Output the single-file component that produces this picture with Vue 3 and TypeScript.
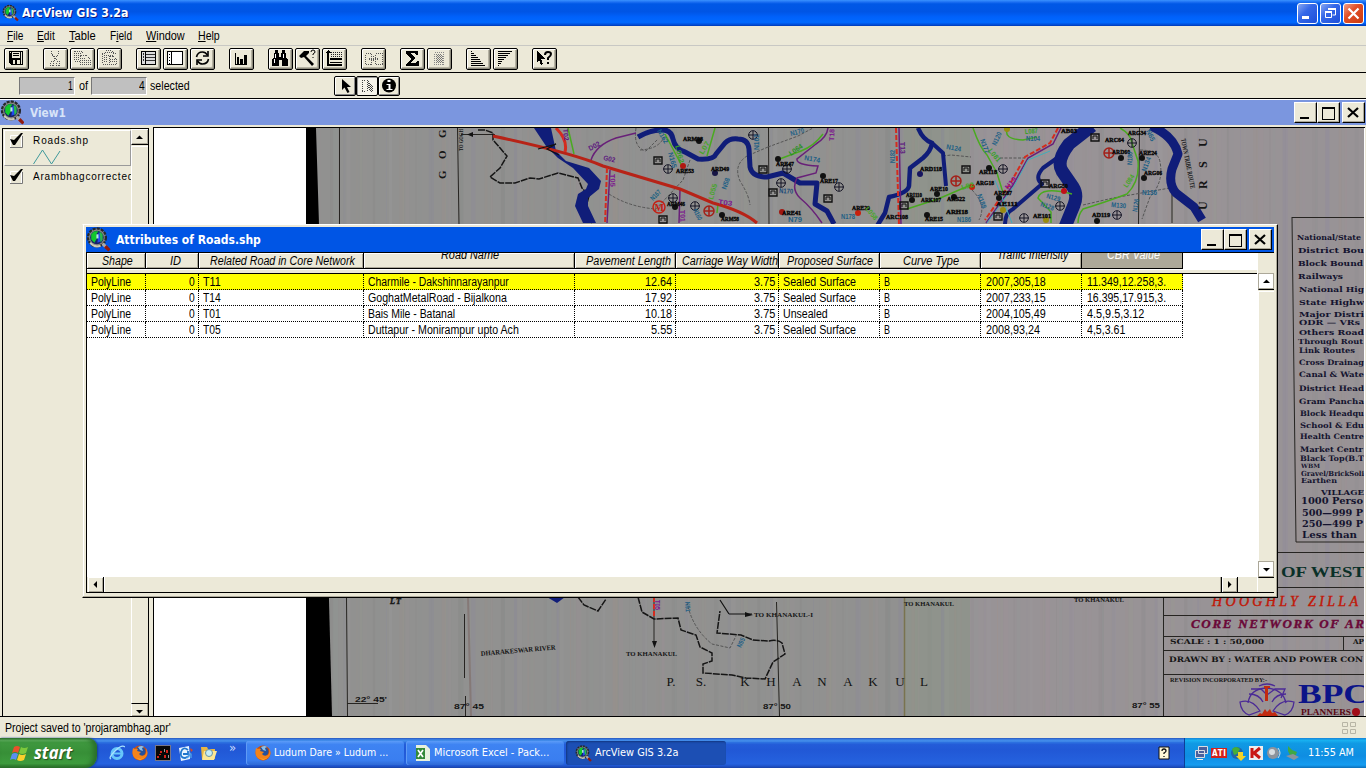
<script setup lang="ts">
interface Tool { id: string; gap: number }
interface Column { label: string; width: number; text: number; shift?: boolean; active?: boolean; right?: boolean }
interface Cell { t: string; w: number }
interface MapText { t: string; x: number; y: number; w?: number; s: number; c?: string; r?: number; k?: string; anchor?: 'start' | 'middle' | 'end' }

const vFit = {
  mounted(el: HTMLElement, binding: { value: number }) {
    const natural = el.offsetWidth
    if (!natural) return
    el.style.transform = `scaleX(${binding.value / natural})`
    el.style.marginRight = `${binding.value - natural}px`
  },
}

const menus = [
  { key: 'F', pre: '', rest: 'ile', w: 16 },
  { key: 'E', pre: '', rest: 'dit', w: 18 },
  { key: 'T', pre: '', rest: 'able', w: 27 },
  { key: 'i', pre: 'F', rest: 'eld', w: 22 },
  { key: 'W', pre: '', rest: 'indow', w: 39 },
  { key: 'H', pre: '', rest: 'elp', w: 22 },
]

const tools: Tool[] = [
  { id: 'save', gap: 0 }, { id: 'cut', gap: 14 }, { id: 'copy', gap: 2 }, { id: 'paste', gap: 2 },
  { id: 'selall', gap: 14 }, { id: 'selnone', gap: 2 }, { id: 'switch', gap: 2 }, { id: 'chart', gap: 14 },
  { id: 'find', gap: 14 }, { id: 'query', gap: 2 }, { id: 'promote', gap: 2 }, { id: 'join', gap: 14 },
  { id: 'sum', gap: 14 }, { id: 'calc', gap: 2 }, { id: 'asc', gap: 14 }, { id: 'desc', gap: 2 }, { id: 'help', gap: 14 },
]

const columns: Column[] = [
  { label: 'Shape', width: 59, text: 31 },
  { label: 'ID', width: 53, text: 11, right: true },
  { label: 'Related Road in Core Network', width: 165, text: 145 },
  { label: 'Road Name', width: 211, text: 58, shift: true },
  { label: 'Pavement Length', width: 101, text: 85, right: true },
  { label: 'Carriage Way Width', width: 103, text: 96, right: true },
  { label: 'Proposed Surface', width: 101, text: 86 },
  { label: 'Curve Type', width: 101, text: 56 },
  { label: 'Traffic Intensity', width: 101, text: 71, shift: true },
  { label: 'CBR Value', width: 101, text: 53, shift: true, active: true },
]

const c = (t: string, w: number): Cell => ({ t, w })
const rows: Cell[][] = [
  [c('PolyLine', 40), c('0', 6), c('T11', 18), c('Charmile - Dakshinnarayanpur', 141), c('12.64', 27), c('3.75', 21), c('Sealed Surface', 73), c('B', 6), c('2007,305,18', 60), c('11.349,12.258,3.', 79)],
  [c('PolyLine', 40), c('0', 6), c('T14', 18), c('GoghatMetalRoad - Bijalkona', 139), c('17.92', 27), c('3.75', 21), c('Sealed Surface', 73), c('B', 6), c('2007,233,15', 60), c('16.395,17.915,3.', 79)],
  [c('PolyLine', 40), c('0', 6), c('T01', 18), c('Bais Mile - Batanal', 87), c('10.18', 27), c('3.75', 21), c('Unsealed', 45), c('B', 6), c('2004,105,49', 60), c('4.5,9.5,3.12', 57)],
  [c('PolyLine', 40), c('0', 6), c('T05', 18), c('Duttapur - Monirampur upto Ach', 151), c('5.55', 21), c('3.75', 21), c('Sealed Surface', 73), c('B', 6), c('2008,93,24', 54), c('4,5,3.61', 38)],
]

const ink = '#14132e'
const legend: MapText[] = ([
  ['National/State', 1297, 240, 64, 8], ['District Bou', 1298, 253, 66, 8], ['Block Bound', 1298, 266, 65, 8],
  ['Railways', 1298, 279, 45, 8], ['National Hig', 1299, 292, 65, 8], ['State Highw', 1299, 305, 65, 8],
  ['Major Distri', 1299, 317, 65, 8], ['ODR — VRs', 1299, 325, 61, 7], ['Others Road', 1299, 335, 65, 8],
  ['Through Rout', 1298, 344, 65, 7], ['Link Routes', 1299, 353, 56, 7.5], ['Cross Drainag', 1299, 365, 65, 7.5],
  ['Canal & Wate', 1299, 377, 65, 7.5], ['District Head', 1299, 391, 65, 7.5], ['Gram Pancha', 1299, 404, 65, 7.5],
  ['Block Headqu', 1300, 416, 64, 7.5], ['School & Edu', 1300, 428, 64, 7.5], ['Health Centre', 1300, 439, 64, 7.5],
  ['Market Centr', 1300, 452, 63, 7.5], ['Black Top(B.T', 1300, 461, 64, 7.5], ['WBM', 1301, 468, 19, 6],
  ['Gravel/BrickSoli', 1301, 476, 63, 7], ['Earthen', 1301, 483, 36, 7], ['VILLAGE', 1321, 495, 43, 8],
  ['1000 Perso', 1301, 504, 62, 8.5], ['500—999 P', 1302, 516, 61, 8.5], ['250—499 P', 1302, 527, 61, 8.5], ['Less than', 1302, 538, 55, 8.5],
] as [string, number, number, number, number][]).map(([t, x, y, w, s]) => ({ t, x, y, w, s, c: ink, k: 'd' }))

const titleBlock: MapText[] = [
  { t: 'OF WEST', x: 1281, y: 577, w: 84, s: 15, c: '#0a3028', k: 'b' },
  { t: 'HOOGHLY ZILLA', x: 1212, y: 606, w: 146, s: 14, c: '#c01808', k: 'i' },
  { t: 'CORE NETWORK OF AR', x: 1191, y: 628, w: 173, s: 13, c: '#6a0838', k: 'bi' },
  { t: 'SCALE :  1 : 50,000', x: 1170, y: 644, w: 94, s: 7, k: 'd' },
  { t: 'AP', x: 1353, y: 644, w: 11, s: 7, k: 'd' },
  { t: 'DRAWN BY : WATER AND POWER CON', x: 1169, y: 662, w: 194, s: 7.5, k: 'd' },
  { t: 'REVISION INCORPORATED BY:-', x: 1170, y: 682, w: 97, s: 6.5, k: 'b' },
  { t: 'BPC', x: 1298, y: 703, w: 71, s: 27, c: '#0c1488', k: 'b' },
  { t: 'PLANNERS', x: 1301, y: 715, w: 50, s: 9, c: '#5a0814', k: 'b' },
]

const khanakul: MapText[] = ([['P.', 671], ['S.', 701], ['K', 745], ['H', 771], ['A', 797], ['N', 822], ['A', 848], ['K', 873], ['U', 900], ['L', 924]] as [string, number][])
  .map(([t, x]) => ({ t, x, y: 686, s: 13, c: '#111', anchor: 'middle' }))

const places: MapText[] = [
  { t: 'G', x: 446, y: 138, s: 11, r: -90, k: 'b' }, { t: 'O', x: 446, y: 159, s: 11, r: -90, k: 'b' }, { t: 'G', x: 446, y: 179, s: 11, r: -90, k: 'b' },
  { t: 'TO GOGH', x: 463, y: 151, w: 22, s: 6, r: -90, k: 'b' },
  { t: 'U', x: 1207, y: 147, s: 12, r: -90, k: 'b' }, { t: 'S', x: 1207, y: 168, s: 12, r: -90, k: 'b' }, { t: 'R', x: 1207, y: 189, s: 12, r: -90, k: 'b' }, { t: 'U', x: 1207, y: 210, s: 12, r: -90, k: 'b' },
  { t: 'TOWN TRIBE ROUTE', x: 1181, y: 139, w: 51, s: 7, r: 79, k: 'b' },
  { t: 'DHARAKESWAR RIVER', x: 481, y: 656, w: 75, s: 7, r: -5, k: 'b' },
  { t: 'TO KHANAKUL', x: 626, y: 656, w: 51, s: 7, k: 'b' },
  { t: 'TO KHANAKUL-I', x: 754, y: 617, w: 59, s: 7, k: 'b' },
  { t: 'TO KHANAKUL', x: 904, y: 606, w: 50, s: 6.5, k: 'b' },
  { t: 'TO KHANAKUL', x: 1074, y: 602, w: 50, s: 6, k: 'b' },
  { t: "22° 45'", x: 355, y: 702, w: 32, s: 7, k: 's' }, { t: '87° 45', x: 454, y: 709, w: 30, s: 7.5, k: 's' },
  { t: '87° 50', x: 763, y: 709, w: 28, s: 7.5, k: 's' }, { t: '87° 55', x: 1132, y: 708, w: 28, s: 7.5, k: 's' },
  { t: 'LT', x: 390, y: 604, w: 11, s: 8, k: 'bi' },
]

const villages: MapText[] = ([
  ['ARM98', 683, 141, 20], ['ARE53', 676, 173, 18], ['ARD49', 711, 171, 18], ['ARM46', 667, 206, 18], ['ARM58', 721, 221, 18],
  ['ARE47', 776, 166, 18], ['ARE17', 820, 183, 18], ['ARE41', 782, 215, 19], ['ARE20', 852, 210, 18], ['ARC108', 886, 219, 22],
  ['ARD118', 920, 171, 22], ['ARE10', 930, 191, 18], ['ARI110', 906, 197, 16], ['ARK107', 921, 202, 20], ['ARS22', 947, 201, 18],
  ['ARG18', 976, 185, 18], ['ARE15', 925, 221, 18], ['ARH18', 946, 214, 22], ['AR118', 979, 174, 18], ['AB03', 1061, 133, 16],
  ['ARC64', 1105, 142, 19], ['ARD60', 1112, 154, 18], ['ARE24', 1139, 155, 18], ['ARG06', 1144, 175, 18], ['ARG50', 1049, 188, 19],
  ['AE101', 1033, 218, 18], ['AD119', 1092, 217, 18], ['ARE87', 994, 195, 18], ['AE111', 996, 206, 22], ['ARG34', 1128, 135, 18],
] as [string, number, number, number][]).map(([t, x, y, w]) => ({ t, x, y, w, s: 6.5, c: '#080808', k: 'v' }))

const routes: MapText[] = ([
  ['T02', 563, 129, 12, 85, '#5b167e'], ['D02', 590, 151, 12, -28, '#5b167e'], ['G02', 603, 160, 12, 12, '#5b167e'], ['T05', 610, 174, 13, 88, '#7b168e'],
  ['N162', 657, 131, 15, 60, '#176080'], ['L062', 675, 146, 18, 75, '#359c28'], ['N165', 668, 153, 16, 75, '#205f85'], ['L07', 703, 155, 14, -60, '#45a528'],
  ['N162', 759, 150, 16, -90, '#205f85'], ['N170', 791, 136, 14, -15, '#205f85'], ['L064', 791, 156, 15, -35, '#259020'], ['N174', 804, 160, 16, 10, '#205f85'],
  ['N170', 779, 193, 14, 3, '#184878'], ['N167', 653, 201, 12, -45, '#156080'], ['T03', 718, 204, 14, 8, '#7b168e'], ['L055', 713, 200, 16, -75, '#45a528'],
  ['N58', 726, 190, 12, -70, '#205f85'], ['T01', 680, 210, 12, 88, '#7b168e'], ['N160', 693, 210, 12, 65, '#205f85'], ['T18', 834, 141, 12, -88, '#7b168e'],
  ['T13', 900, 142, 12, 88, '#5b167e'], ['N182', 895, 163, 13, -90, '#205f85'], ['N124', 946, 149, 15, 10, '#205f85'], ['N177', 980, 140, 15, 70, '#205f85'],
  ['L081', 988, 151, 15, 50, '#35a028'], ['L058', 865, 209, 15, 50, '#45a528'], ['N178', 841, 219, 14, 0, '#205f85'], ['N79', 788, 222, 14, 0, '#205f85'],
  ['N186', 957, 222, 14, 0, '#205f85'], ['N188', 977, 195, 15, 70, '#205f85'], ['L087', 1025, 134, 13, -5, '#35a028'], ['N104', 1026, 141, 14, 0, '#205f85'],
  ['L084', 1127, 188, 14, -55, '#45a528'], ['N180', 1132, 165, 13, -88, '#205f85'], ['N134', 1146, 172, 15, -70, '#205f85'], ['N136', 1142, 195, 15, 0, '#205f85'],
  ['M130', 1111, 207, 15, 5, '#205f85'], ['N126', 1137, 212, 13, -80, '#205f85'], ['N129', 1046, 198, 14, 15, '#205f85'], ['N128', 1040, 206, 14, 20, '#205f85'],
  ['N120', 996, 146, 14, -65, '#205f85'], ['N19', 1008, 190, 14, -50, '#8b168e'], ['T05', 655, 600, 10, 90, '#7b168e'], ['N91', 685, 602, 10, 85, '#205f85'], ['N95', 741, 648, 10, -65, '#205f85'],
  ['N65', 1146, 131, 12, 65, '#205f85'], ['L92', 962, 190, 13, -15, '#45a528'],
] as [string, number, number, number, number, string][]).map(([t, x, y, w, r, col]) => ({ t, x, y, w, s: 7, r, c: col, k: 's' }))

const mapTexts = [...legend, ...titleBlock, ...khanakul, ...places, ...villages, ...routes]
const crosses = [[668, 169], [673, 198], [695, 206], [753, 135], [787, 169], [781, 183], [839, 187], [1003, 169], [1024, 218], [1060, 206], [1132, 143], [1117, 215]]
const redCrosses = [[709, 211], [956, 181], [1109, 153]]
const houses = [[658, 160], [763, 169], [773, 192], [828, 198], [966, 169], [904, 205], [663, 219], [998, 216], [1095, 137], [1045, 183]]
const dots: [number, number, string][] = [
  [683, 166, '#b01810'], [715, 173, '#171545'], [699, 141, '#111'], [778, 159, '#111'], [823, 176, '#111'], [782, 212, '#a01810'], [858, 213, '#c8200c'],
  [920, 174, '#171560'], [972, 187, '#c8200c'], [954, 197, '#111'], [937, 194, '#111'], [912, 200, '#111'], [927, 215, '#111'], [675, 207, '#111'], [989, 168, '#111'],
  [1121, 158, '#111'], [1142, 158, '#111'], [1144, 178, '#111'], [1064, 191, '#c01018'], [1097, 221, '#111'], [999, 198, '#111'], [1003, 210, '#998b10'], [1046, 220, '#998b10'], [722, 215, '#111'], [1007, 129, '#998b10'],
]
const stripes = Array.from({ length: 170 }, (_, i) => ({
  x: 320 + i * 6.1 + ((i * 11) % 7),
  w: 1 + ((i * 7) % 5),
  c: ['#a88f9b', '#837fa8', '#9aa18d', '#8c9d99', '#a78c83', '#777a78', '#a5a3a6'][(i * 5) % 7],
  o: 0.05 + ((i * 13) % 9) / 60,
}))

const fonts: Record<string, string> = { s: 'sans bold', d: 'slab bold', b: 'bold', i: 'ital', bi: 'ital bold', v: 'bold heavy' }
</script>

<template>
  <div class="screen">
    <svg class="defs" width="0" height="0">
      <defs>
        <pattern id="dither" width="2" height="2" patternUnits="userSpaceOnUse">
          <rect width="1" height="1" fill="#222" /><rect x="1" y="1" width="1" height="1" fill="#222" />
        </pattern>
        <symbol id="logo" viewBox="0 0 24 24">
          <circle cx="10.5" cy="10" r="8.6" fill="#888a80" stroke="#25282c" stroke-width="2.2" stroke-dasharray="3 1" />
          <circle cx="10.5" cy="10" r="6.5" fill="#15206a" />
          <path d="M5 7l3-3h4l-2 3 1 3-3 5-3-3z" fill="#12c82c" /><path d="M12 5l3 2-1 7-3 1z" fill="#2048f0" />
          <path d="M13 4l3 3v5l-2 3z" fill="#27b94a" /><path d="M10 7h2v4h-2z" fill="#b8e8e8" />
          <path d="M4 15a9 9 0 0 0 10 3" stroke="#ccc9b8" stroke-width="2" fill="none" />
          <path d="M16 16l3 3" stroke="#aaa" stroke-width="3" /><path d="M18.500 18.500l4 4" stroke="#901c10" stroke-width="3.200" />
        </symbol>
        <symbol id="fox" viewBox="0 0 16 16">
          <circle cx="8" cy="8" r="7.5" fill="#cf4d08" /><circle cx="8.500" cy="6.500" r="5" fill="#25519c" />
          <path d="M6 2q4-2 6 0l-2 1 1 3-3-1z" fill="#89c0ea" />
          <path d="M1 3l2 1q1-1 3 0l-1 2 4 1-2 2q2 3 6 1 2-2 1-7 3 5 0 9-4 5-10 2Q-1 11 1 3z" fill="#f4831a" /><path d="M2 10q4 6 10 3-5 4-10-3z" fill="#fdc83a" />
        </symbol>
        <symbol id="tick" viewBox="0 0 16 17">
          <path d="M1.500 3.500h11v12h-11z" fill="#e8e5d4" stroke="#fff" /><path d="M1 15.500h12.500V4" fill="none" stroke="#777" /><path d="M1 7l4 1 7-7h2L6 13H4z" />
        </symbol>
      </defs>
    </svg>

    <header class="titlebar">
      <svg class="logo-sm" width="17" height="18"><use href="#logo" width="17" height="18" /></svg>
      <span v-fit="106" class="fit caption">ArcView GIS 3.2a</span>
      <div class="xp-buttons">
        <i class="xp"><svg width="19" height="19"><path d="M4 12h7v3H4z" fill="#fff" /></svg></i>
        <i class="xp"><svg width="19" height="19" fill="none" stroke="#fff"><path d="M4.500 8.500h6v5h-6z" /><path d="M4 8h7M7 5h8" stroke-width="2" /><path d="M14.500 5v6h-3" /></svg></i>
        <i class="xp close"><svg width="19" height="19" stroke="#fff" stroke-width="2.200"><path d="M4.500 4.500l10 10m0-10l-10 10" /></svg></i>
      </div>
    </header>

    <nav class="menubar">
      <span v-for="m in menus" :key="m.key" v-fit="m.w" class="fit menu">{{ m.pre }}<u>{{ m.key }}</u>{{ m.rest }}</span>
    </nav>

    <div class="toolbar">
      <button v-for="t in tools" :key="t.id" class="tool" :class="{ spaced: t.gap === 14, tight: t.gap === 2 }">
        <svg width="25" height="22" viewBox="0 0 25 22" shape-rendering="crispEdges">
          <g v-if="t.id === 'save'"><path d="M5 3h14v14H7l-2-2z" /><path d="M6 4h1v1H6zM8 4h8v6H8zM9 12h2v4H9zM13 12h3v4h-3zM17 4h1v12h-1z" fill="#ece9d8" /><path d="M9 5h6v1H9zM9 7h6v1H9z" /></g>
          <g v-else-if="t.id === 'cut'" stroke="#555" fill="none" stroke-dasharray="1 1"><path d="M8.500 3v3l6 7M15.500 3v3l-5 7" stroke-width="1.500" /><path d="M7.500 13.500h3v4h-3zM13.500 13.500h3v4h-3z" /></g>
          <g v-else-if="t.id === 'copy'" stroke="#555" fill="none" stroke-dasharray="1 1"><path d="M4.500 3.500h7l3 3M4.500 3v10h6M6 5.500h5M6 7.500h5M6 9.500h4M6 11.500h4" /><path d="M10.500 7.500h6l4 4v5h-10zM12 10.500h4M12 12.500h7M12 14.500h7" /></g>
          <g v-else-if="t.id === 'paste'" stroke="#555" fill="none" stroke-dasharray="1 1"><path d="M5 5.500h3l2-3h5l2 3h3M5.500 6v10h6M7 7.500h10M7 9.500h4M7 11.500h4M7 13.500h4M8 4.500h9" /><path d="M12.500 8.500h4l3 3v5h-7zM13 11.500h5M13 13.500h6" /></g>
          <g v-else-if="t.id === 'selall'"><path d="M5 3h15v14H5z" /><path d="M6 4h3v12H6zM10 4h9v12h-9z" fill="#ddd" /><path d="M7 5h1v2H7zm0 3h1v2H7zm0 3h1v2H7zM10 6h9v1h-9zm0 3h9v1h-9zm0 3h9v1h-9z" fill="#333" /></g>
          <g v-else-if="t.id === 'selnone'"><path d="M4 3h16v14H4z" /><path d="M5 4h3v12H5zM9 4h10v12H9z" fill="#fff" /><path d="M6 6h1v1H6zm0 3h1v1H6zm0 3h1v1H6zm0 3h1v1H6z" /></g>
          <g v-else-if="t.id === 'switch'" fill="none" stroke="#000" stroke-width="1.600" shape-rendering="auto"><path d="M6.500 9q1-5 6-5 3 0 5 3M18.500 11q-1 5-6 5-3 0-5-3" /><path d="M18 3v5h-5M7 17v-5h5" /></g>
          <g v-else-if="t.id === 'chart'"><path d="M6 5h1v11H6zM6 16h12v1H6zM8 9h2v7H8zM11 11h3v5h-3zM15 7h3v9h-3z" /></g>
          <g v-else-if="t.id === 'find'"><path d="M7 2h3v3H7zM14 2h3v3h-3zM6 5h5v4h2V5h5v4l2 3v6h-6v-6h-3v6H4v-6l2-3z" /><path d="M7 6h1v4H7zM15 6h1v4h-1zM6 11h1v4H6z" fill="#fff" /></g>
          <g v-else-if="t.id === 'query'" shape-rendering="auto"><path d="M4 8l5-5h5v2l-3 3 8 8-2 2-8-9-3 1z" /><path d="M16 4q0-2 2-2t2 2q0 1-2 2v1M18 9v1" fill="none" stroke="#000" /></g>
          <g v-else-if="t.id === 'promote'"><path d="M6 2l3 3H7v11h13v2H5V5H3zM8 10h12v2H8zM8 14h12v1H8z" /><path d="M9 4.500h11M9 6.500h11M9 8.500h11" stroke="#222" stroke-dasharray="1 1" /></g>
          <g v-else-if="t.id === 'join'" fill="none" stroke="#555" stroke-dasharray="1 1"><path d="M4.500 5.500h6v11h-6zM14.500 5.500h7v11h-7zM8 10.500h10M8 11.500h10M12.500 8v6" /></g>
          <g v-else-if="t.id === 'sum'"><path d="M6 3h12v4h-2l-1-2h-4l4 5-5 5h6l1-2h2v5H6v-2l5-5-5-6z" /></g>
          <g v-else-if="t.id === 'calc'" fill="none" stroke="#888" stroke-dasharray="1 1"><path d="M7.500 4.500h9v12h-9z" /><path d="M9 6.500h6M9 8.500h7M9 10.500h7M9 12.500h7M9 14.500h7M10 7.500h6M10 9.500h6M10 11.500h6M10 13.500h6" stroke="#777" /></g>
          <g v-else-if="t.id === 'asc'"><path d="M5 3h1v1H5zm0 2h3v1H5zm0 2h5v1H5zm0 2h7v1H5zm0 2h9v1H5zm0 2h10v1H5zm0 2h12v1H5zm0 2h14v1H5z" /></g>
          <g v-else-if="t.id === 'desc'"><path d="M5 3h14v1H5zm0 2h12v1H5zm0 2h10v1H5zm0 2h8v1H5zm0 2h6v1H5zm0 2h4v1H5zm0 2h3v1H5zm0 2h1v1H5z" /></g>
          <g v-else><path d="M5 3l8 8H9l2 5-2 1-2-5-2 2z" /><path d="M13 7q0-3 3-3t3 2q0 2-3 4v2M16 14v2" fill="none" stroke="#000" stroke-width="2" shape-rendering="auto" /></g>
        </svg>
      </button>
    </div>

    <div class="selectbar">
      <div class="field f1"><span v-fit="5" class="fit">1</span></div>
      <span v-fit="9" class="fit">of</span>
      <div class="field f2"><span v-fit="6" class="fit">4</span></div>
      <span v-fit="40" class="fit">selected</span>
      <div class="modes">
        <i class="mode"><svg width="22" height="18"><path d="M7 2v11l2.500-2.500 3 5.500 2-1-2.500-5H16z" /></svg></i>
        <i class="mode on"><svg width="20" height="18" shape-rendering="crispEdges" fill="none" stroke="#444" stroke-dasharray="1 1"><path d="M5.500 3v12M5 3.500h3M5 14.500h4M10.500 3v11M11.500 4v8M12.500 6v8M13.500 7v7M14.500 8v7M15.500 9v6" /></svg></i>
        <i class="mode"><svg width="20" height="18"><circle cx="10" cy="8.500" r="7" /><path d="M8.500 3h3v2h-3zM7.500 7h4v5h2v1h-6v-1h2V8h-2z" fill="#fff" /></svg></i>
      </div>
    </div>

    <div class="viewtitle">
      <svg width="24" height="25"><use href="#logo" width="25" height="25" /></svg>
      <span v-fit="36" class="fit caption dim">View1</span>
      <div class="classic">
        <i><svg width="22" height="20"><path d="M5 14h9v2H5z" /></svg></i>
        <i><svg width="22" height="20"><path d="M4 4h13v13H4zm1 2v10h11V6z" fill-rule="evenodd" /></svg></i>
        <i class="gap"><svg width="22" height="20"><path d="M5 5l10 9m0-9L5 14" stroke="#000" stroke-width="2.200" /></svg></i>
      </div>
    </div>

    <main class="view">
      <aside class="toc">
        <div class="layers">
          <div class="layer active">
            <svg width="16" height="17"><use href="#tick" width="16" height="17" /></svg>
            <div class="layer-body">
              <span class="lname">Roads.shp</span>
              <svg width="28" height="16"><path d="M.5 15l9-14 9 14 8.500-13" fill="none" stroke="#3f999b" /></svg>
            </div>
          </div>
          <div class="layer">
            <svg width="16" height="17"><use href="#tick" width="16" height="17" /></svg>
            <div class="layer-body"><span class="lname long">Arambhagcorrected</span></div>
          </div>
        </div>
        <div class="vscroll">
          <i class="sb"><svg width="15" height="15"><path d="M4 9h7L7.500 5.500z" /></svg></i>
          <i class="track"></i>
          <i class="sb last"><svg width="15" height="12"><path d="M4 6h7L7.500 9.500z" /></svg></i>
        </div>
      </aside>

      <svg class="map" width="1211" height="588" viewBox="154 128 1211 588">
        <rect x="154" y="128" width="152" height="588" fill="#fff" />
        <rect x="306" y="128" width="1059" height="588" fill="#919190" />
        <rect x="955" y="128" width="409" height="588" fill="#989396" />
        <rect x="904" y="128" width="66" height="588" fill="#8f938c" />
        <rect v-for="s in stripes" :key="s.x" :x="s.x" y="128" :width="s.w" height="588" :fill="s.c" :opacity="s.o" />
        <path d="M306 128h10l3 97 10 375 3 116h-26z" fill="#000" />
        <path d="M904.500 597v119" stroke="#746c40" stroke-width="1.500" opacity=".8" /><path d="M468 597l3 119" stroke="#81706d" stroke-width="2" opacity=".7" />
        <g fill="none" stroke="#262421">
          <path d="M339.500 128v97M346.500 597l1 119M457.500 128l1.500 97M464.500 614v64M465.500 696v20M768.500 128l.5 97M776.500 602l3 114M1139.500 128l-1 97M347 703.500h31M461 134.500h34" />
          <path d="M1172 190v33M654 600v44M1278 552.500h87M1278 587.500h87M1163.500 597v119M1163 615.500h202M1163 636.500h202M1163 650.500h202M1163 674.500h202M1343.500 636v14M1292 217.500h73M1292 217l4 325h69" />
        </g>
        <g fill="none" stroke="#555" stroke-dasharray="3 1.500">
          <path d="M609 194q20 13 47 15M640 150q19-1 24-13M768 147l-21 9q-14 9-7 25 9 14 10 24M768 147l30-11 15-8M690 160l-7 20-28 30M943 156l8-1 20 2M1000 158h25M1083 205l30-7 57-10M1140 150q18 0 20 12 4 20-10 35l-8 22M636 128q-3 20 10 23l12-12M687 602q5 26 25 42l18 4 6-12M972 190q15 15 7 30" />
        </g>
        <g fill="none" stroke="#151515" stroke-width="1.500" stroke-dasharray="7 1">
          <path d="M478 130h7l8 3v7l14 16-7 12-10 9 10 6h15l15-5 9 1 19-6 20 5 4 10 7 8-4 15 7 12M578 597l6 8 14 6 8-12M638 597l4 15 12 7 24-1 3 12 15 5 4 12 12 6v8l-9 3v9l29 2 14 3 19 1 8-17 12-8-3-11q-5-4-13-2l-16-1-12-5-24-2 3-22" />
        </g>
        <path d="M534 128h17l5 23 10 10 23 7 12 13-2 8-11 9v8l8 17h-13l-8-17 3-12 8-5 2-5-15-16-15-10-12-12z" fill="#101d79" />
        <g fill="none" stroke="#101d79" stroke-linejoin="round">
          <path d="M638 137q12-7 23-7 10-1 12 9 2 10 12 13l13 7q16 1 18-5l9-11q5-5 13-4 10 0 11 10l1 18q2 10 17 10l16-4 17 10h17l-2 21 12 7 7 13" stroke-width="5" />
          <path d="M918 128q5 12 14 15-1 8-9 15l-13 10-1 18q-1 7-20 11l-4 16-8 13" stroke-width="4.500" /><path d="M932 143l11 10 3 33" stroke-width="4" />
          <path d="M1092 126l-23 18q-13 17-7 27l11 16q5 8 1 18l-9 22" stroke-width="13" /><path d="M1060 156l-17 12q-9 10-1 16l-29 25q-8 4-8 15" stroke-width="4" />
          <path d="M1151 126q23 10 27 28l-6 15q-4 15 4 24l18 14 8 13" stroke-width="9" />
        </g>
        <path d="M547 597h18l-8 6z" fill="#101d79" />
        <g fill="none" stroke="#4aaa20" stroke-width="1.500">
          <path d="M568 128l6 26M665 134l17 32M715 128l-8 28M823 134q-9 12-22 17l-24 9M718 204l-1 9M973 128q7 20 14 27l10 18 7 23M1008 128q-6 11 15 12l14-3M1120 128q11 6 12 15l6 18q2 20-11 33-24 9-44 15-5 6-5 14M1072 194q-31-8-34 4l13 14v11M973 184l-35 15-31 10" />
        </g>
        <g fill="none" stroke="#682078" stroke-width="1.500"><path d="M591 160q5-15 25-22l20-5M828 128q-1 9-12 16l-19 15q-1 6 21 7l-2 7-19 5q-6 11 3 20 12 10 22 25M680 190l-1 33M610 170l-3 53M899 128l2 97M1061 128l-8 16-25 14-15 27-27 38" /></g>
        <g fill="none" stroke="#d42c1e">
          <path d="M493 136q80 17 110 30l77 23 33 14q30 8 44 20" stroke="#b72317" stroke-width="3" /><path d="M556 128q12 12 9 24" stroke-width="3" />
          <path d="M896 128l3 97M607 168l-2 57M1058 128l-8 15-25 14-15 27-25 36M654 597v20" stroke-width="2" stroke-dasharray="5 2" />
        </g>
        <path d="M1050 151l-22 9-14 26-27 37M995 180l17 43" fill="none" stroke="#40adbb" stroke-width="1" />
        <path d="M538 149l18-5-9 5 12 6M729 614h23M729 614l-9-14" fill="none" stroke="#111" stroke-width="1.200" />
        <path d="M745 612v5l8-2zM652 641h5l-2.500 7zM473 132v5l-6-2.500z" fill="#111" />
        <g v-for="h in houses" :key="'h' + h[0] + h[1]"><path :d="`M${h[0] - 4} ${h[1] - 3}h8v7h-8z`" fill="none" stroke="#111" stroke-width="1.400" /><path :d="`M${h[0] - 2} ${h[1] + 2}v-3h4v3`" fill="none" stroke="#111" /></g>
        <g v-for="p in crosses" :key="'c' + p[0]" fill="none" stroke="#151525"><circle :cx="p[0]" :cy="p[1]" r="4.3" /><path :d="`M${p[0] - 5} ${p[1]}h10M${p[0]} ${p[1] - 4}v8`" /></g>
        <g v-for="p in redCrosses" :key="'r' + p[0]" fill="none" stroke="#a32018" stroke-width="1.500"><circle :cx="p[0]" :cy="p[1]" r="5" /><path :d="`M${p[0] - 5} ${p[1]}h10M${p[0]} ${p[1] - 5}v10`" /></g>
        <circle cx="659" cy="207" r="6" fill="none" stroke="#c42014" stroke-width="1.500" /><text x="654.500" y="210.500" font-size="10" fill="#c42014" font-weight="bold">M</text>
        <circle v-for="d in dots" :key="'d' + d[0]" :cx="d[0]" :cy="d[1]" r="3" :fill="d[2]" />
        <text v-for="(m, i) in mapTexts" :key="i" :x="m.x" :y="m.y" :font-size="m.s" :fill="m.c || '#151515'" :stroke="m.c || '#151515'" :textLength="m.w"
          :lengthAdjust="m.k === 'i' || m.k === 'bi' ? 'spacing' : 'spacingAndGlyphs'"
          :text-anchor="m.anchor || 'start'" :transform="m.r ? `rotate(${m.r} ${m.x} ${m.y})` : undefined"
          :class="fonts[m.k || '']">{{ m.t }}</text>
        <g fill="none" stroke="#4b2a96" stroke-width="1.300">
          <path d="M1240 702q12-4 20 9l-11 4q-8-3-9-13zM1294 702q-13-4-21 9l12 4q8-3 9-13zM1249 694q10 0 14 8M1286 694q-10 0-14 8M1251 689h10l6 6 8-6h10l-4 9M1259 686q8-4 16 0" />
          <path d="M1248 703q2-14 18-15 17 1 20 15" />
        </g>
        <path d="M1264 686h6v2h-2v13h-3v-13h-1zM1257 716l3-3 2 1 3-5 2 3 3-3 2 4 3-1 3 4z" fill="#c22a10" /><circle cx="1356" cy="712" r="4" fill="#a10c18" />
        <rect x="1364" y="128" width="1" height="588" fill="#fff" />
      </svg>
    </main>

    <section class="attrs">
      <div class="attr-title">
        <svg width="25" height="25"><use href="#logo" width="25" height="25" /></svg>
        <span v-fit="145" class="fit caption">Attributes of Roads.shp</span>
        <div class="classic">
          <i><svg width="22" height="20"><path d="M5 14h9v2H5z" /></svg></i>
          <i><svg width="22" height="20"><path d="M4 4h13v13H4zm1 2v10h11V6z" fill-rule="evenodd" /></svg></i>
          <i class="gap"><svg width="22" height="20"><path d="M5 5l10 9m0-9L5 14" stroke="#000" stroke-width="2.200" /></svg></i>
        </div>
      </div>
      <div class="attr-body">
        <div class="grid">
          <div class="heads">
            <div v-for="col in columns" :key="col.label" class="head" :class="{ shift: col.shift, active: col.active, right: col.right }" :style="{ width: col.width + 'px' }">
              <span v-fit="col.text" class="fit">{{ col.label }}</span>
            </div>
          </div>
          <div class="rows">
            <div v-for="(r, ri) in rows" :key="ri" class="row" :class="{ picked: ri === 0 }">
              <div v-for="(cell, ci) in r" :key="ci" class="cell" :class="{ right: ci === 1 || ci === 4 || ci === 5 }" :style="{ width: columns[ci].width + 'px' }">
                <span v-fit="cell.w" class="fit">{{ cell.t }}</span>
              </div>
            </div>
          </div>
          <div class="hscroll">
            <i class="hb"><svg width="15" height="15"><path d="M9 4v7L5.500 7.500z" /></svg></i>
            <i class="htrack"></i>
            <i class="hb"><svg width="15" height="15"><path d="M6 4v7l3.500-3.500z" /></svg></i>
          </div>
        </div>
        <div class="side">
          <i class="sb white"><svg width="15" height="15"><path d="M4 9h7L7.500 5.500z" /></svg></i>
          <i class="track"></i>
          <i class="sb white"><svg width="15" height="15"><path d="M4 6h7L7.500 9.500z" /></svg></i>
        </div>
      </div>
    </section>

    <div class="status">
      <span v-fit="166" class="fit">Project saved to 'projarambhag.apr'</span>
      <svg width="16" height="14" fill="none" stroke="#b8b5a6"><path d="M1.500 1.500h5v4h-5zM9.500 1.500h5v4h-5zM1.500 8.500h5v4h-5zM9.500 8.500h5v4h-5z" /></svg>
    </div>

    <footer class="taskbar">
      <div class="start">
        <svg width="19" height="19" viewBox="0 0 19 19"><path d="M4 3q3-2 6 0L8 9q-3-2-6 0z" fill="#e8512b" /><path d="M11 3q3 2 7 0l-2 6q-4 2-7 0z" fill="#7cc83c" /><path d="M2 10q3-2 6 0l-2 6q-3-2-6 0z" fill="#5a8ff0" /><path d="M9 10q3 2 7 0l-2 6q-4 2-7 0z" fill="#fbd02c" /></svg>
        <span v-fit="38" class="fit">start</span>
      </div>
      <div class="quick">
        <svg width="16" height="16" fill="none"><circle cx="8" cy="8.500" r="5" stroke="#67c7fa" stroke-width="3" /><path d="M4 8.500h9" stroke="#67c7fa" stroke-width="2" /><path d="M2 14q-3-1 4-8t10-4" stroke="#a8e2ff" stroke-width="1.300" /></svg>
        <svg width="16" height="16"><use href="#fox" width="16" height="16" /></svg>
        <svg width="16" height="16"><path d="M0 0h16v16H0z" fill="#778" /><path d="M1 1h14v14H1z" fill="#080808" /><path d="M2 11h2v2H2zm2-2h2v1H4zm1-3h2v2H5zm4 4h2v3H9zm2-5h2v3h-2zm-4 1l3 4" fill="#d42018" /><path d="M9 4h1v3H9zm4 6h1v3h-1z" fill="#999" /></svg>
        <svg width="16" height="16"><path d="M1 3l10-2 1 13-9 2z" fill="#e8f5ff" /><path d="M10 5q-5-4-7 2-1 6 4 6l4-2M5 9h5V6" fill="none" stroke="#2076ce" stroke-width="1.800" /><path d="M9 13l4-5M13 9v4" fill="none" stroke="#4b9be6" stroke-width="1.500" /><path d="M12 3l3 2-2 2z" fill="#d54720" /></svg>
        <svg width="16" height="16"><path d="M0 2h6l1 2h7v10H1z" fill="#e9b642" /><path d="M3 6h13l-3 9H1z" fill="#fae696" /><circle cx="8" cy="8" r="3.500" fill="#c7edf7" stroke="#6a94a4" /></svg>
        <span>»</span>
      </div>
      <div class="tasks">
        <div class="task"><svg width="16" height="16"><use href="#fox" width="16" height="16" /></svg><span v-fit="114" class="fit">Ludum Dare » Ludum ...</span></div>
        <div class="task"><svg width="16" height="16"><path d="M1 0h10l4 4v12H1z" fill="#e7f1dd" /><path d="M1 3h9v11H1z" fill="#338939" /><path d="M3 5l5 7m0-7l-5 7" stroke="#fff" stroke-width="1.700" /></svg><span v-fit="115" class="fit">Microsoft Excel - Pack...</span></div>
        <div class="task current"><svg width="17" height="17"><use href="#logo" width="17" height="17" /></svg><span v-fit="83" class="fit">ArcView GIS 3.2a</span></div>
      </div>
      <svg class="ask" width="12" height="14"><path d="M1 1h10v12H1z" fill="#fff8d8" stroke="#111" /><path d="M4 5q0-2 2-2t2 2q0 1-2 2v1M6 10v1" stroke="#111" fill="none" stroke-width="1.300" /></svg>
      <div class="tray">
        <div class="tray-icons">
          <svg width="16" height="16"><path d="M5.500 1.500h9v7h-9zM2.500 5.500h9v7h-9z" fill="#4a5f9c" stroke="#d8dce4" /><path d="M4 14h6v1H4z" fill="#eee" /></svg>
          <svg width="16" height="16"><path d="M0 3h16v10H0z" fill="#d4211b" /><text x="1" y="11" font-size="8" font-weight="bold" fill="#fff" textLength="14">ATI</text></svg>
          <svg width="16" height="16"><circle cx="7" cy="8" r="6" fill="#2265a7" /><path d="M2 4q4-4 8 0l-3 5-3 1z" fill="#45ae39" /><path d="M8 7h5v4h3l-5 5-5-5h2z" fill="#f3d32a" /></svg>
          <svg width="16" height="16"><path d="M1 1h14v14H1z" fill="#eee" /><path d="M4 3v10M12 3l-6 5 6 5" stroke="#c81712" stroke-width="3" fill="none" /></svg>
          <svg width="16" height="16"><circle cx="7" cy="8" r="6" fill="#8d939c" /><circle cx="6" cy="7" r="3" fill="#d7dce0" /><path d="M12 3q4 5 0 10" stroke="#ddd" fill="none" /></svg>
          <svg width="16" height="16"><path d="M4 1l4 4 5 2-2 5-5-2-2-4z" fill="#3fa846" /><path d="M2 11l7-2 6 3-5 3z" fill="#8c949c" /></svg>
        </div>
        <span v-fit="46" class="fit">11:55 AM</span>
      </div>
    </footer>
  </div>
</template>

<style>
html, body { margin: 0; overflow: hidden; }
</style>

<style scoped>
* { box-sizing: border-box; }
.screen { position: relative; width: 1366px; height: 768px; overflow: hidden; background: #ece9d8; display: flex; flex-direction: column; font: 12px/14px "Liberation Sans", sans-serif; color: #000; }
.screen > * { flex-shrink: 0; }
.defs { position: absolute; }
i { display: block; font-style: normal; }
svg { display: block; flex-shrink: 0; }
.fit { display: inline-block; white-space: nowrap; transform-origin: left center; flex-shrink: 0; }
.caption { font: bold 13px/16px "DejaVu Sans Condensed", "DejaVu Sans", sans-serif; color: #fff; }
.titlebar { height: 26px; display: flex; align-items: center; padding: 0 2px; background: linear-gradient(#3a92ff 0, #1c6ff2 8%, #0058e6 15%, #0055e5 45%, #0061fb 65%, #0069ff 86%, #0050dc 94%, #0039b4 100%); }
.titlebar .caption { margin-left: 3px; text-shadow: 1px 1px #0a1883; }
.xp-buttons { margin-left: auto; display: flex; gap: 2px; }
.xp { width: 21px; height: 21px; border: 1px solid #fff; border-radius: 3px; background: linear-gradient(135deg, #87a7f2, #3568e8 40%, #1d4fd9); }
.xp.close { background: linear-gradient(135deg, #f0a088, #e24f27 40%, #c93a10); }
.menubar { height: 20px; border-bottom: 1px solid #c8c8c4; padding: 3px 0 0 7px; display: flex; gap: 14px; }
.menu u { text-underline-offset: 1px; }
.toolbar { height: 27px; border-bottom: 1px solid #000; padding: 2px 0 0 4px; display: flex; }
.tool { position: relative; padding: 0; width: 25px; height: 22px; border: 1px solid #000; border-radius: 2px; background: #ece9d8; box-shadow: inset 1px 1px #fff, inset -1px -1px #8b897b, inset -2px -2px #b6b3a3; }
.tool svg { margin: -1px; }
.spaced { margin-left: 14px; }
.tight { margin-left: 2px; }
.selectbar { height: 26px; border-bottom: 1px solid #000; padding: 0 0 0 19px; display: flex; align-items: center; }
.field { width: 56px; height: 18px; background: #c0c0c0; border: 1px solid; border-color: #777 #fff #fff #777; display: flex; justify-content: flex-end; align-items: center; padding-right: 1px; margin-right: 4px; }
.f2 { margin-left: 3px; margin-right: 3px; }
.modes { display: flex; margin-left: 144px; }
.mode { width: 22px; height: 20px; border: 1px solid #000; box-shadow: inset 1px 1px #fff, inset -1px -1px #888; border-radius: 2px; }
.mode.on { background: #f5f3ea; box-shadow: inset 1px 1px #999; }
.viewtitle { height: 28px; border-top: 1px solid #fff; background: #7b96df; border-bottom: 2px solid #ece9d8; display: flex; align-items: center; padding-right: 1px; }
.viewtitle .caption { margin-left: 6px; }
.dim { color: #d8e4f8; }
.classic { margin-left: auto; display: flex; align-self: flex-start; padding-top: 2px; }
.classic i { width: 23px; height: 21px; background: #ece9d8; border: 1px solid; border-color: #fff #000 #000 #fff; box-shadow: inset -1px -1px #aca899; }
.classic .gap { margin-left: 2px; }
.view { height: 590px; border-bottom: 1px solid #000; display: flex; padding-top: 1px; }
.toc { width: 147px; margin: 0 0 0 2px; border: 1px solid #000; border-bottom: 0; display: flex; }
.layers { width: 129px; padding: 1px 0 0 1px; overflow: hidden; }
.layer { height: 36px; padding: 2px 0 0 5px; display: flex; overflow: hidden; }
.layer.active { border: 1px solid; border-color: #fff #9a9a9a #9a9a9a #fff; padding: 1px 0 0 4px; }
.layer-body { margin-left: 8px; }
.lname { display: block; font-size: 10px; line-height: 16px; letter-spacing: .92px; white-space: nowrap; height: 17px; padding-top: 1px; }
.lname.long { letter-spacing: .78px; }
.vscroll, .side { display: flex; flex-direction: column; width: 17px; }
.sb { height: 16px; border-left: 1px solid #fff; border-top: 1px solid #fff; border-bottom: 1px solid #000; box-shadow: inset -1px -1px #aca899; }
.sb.last { height: 13px; border-bottom: 0; border-top: 1px solid #000; }
.track { flex: 1; margin-top: 1px; border-left: 1px solid #fff; border-top: 1px solid #fff; }
.map { margin-left: 4px; width: 1212px; border-left: 1px solid #000; box-shadow: 0 -1px #000; font-family: "Liberation Serif", serif; }
.map text { stroke-width: 0; }
.map .bold { font-weight: bold; }
.map .heavy { stroke-width: .4px; }
.map .ital { font-style: italic; stroke-width: .4px; }
.map .sans { font-family: "Liberation Sans", sans-serif; }
.map .slab { font-family: "DejaVu Serif", serif; }
.attrs { position: absolute; left: 82px; top: 224px; width: 1196px; height: 374px; background: #ece9d8; border: 1px solid; border-color: #fff #000 #000 #ece9d8; padding: 2px 3px 4px 3px; box-shadow: inset -1px -1px #aca899, inset 1px 0 #fff; }
.attr-title { height: 25px; background: #0055e5; display: flex; align-items: center; padding-right: 2px; }
.attr-title .caption { margin-left: 5px; }
.attr-body { height: 341px; display: flex; border: 1px solid #000; border-right: 0; }
.grid { width: 1170px; background: #fff; display: flex; flex-direction: column; flex-shrink: 0; }
.heads { height: 16px; display: flex; flex-shrink: 0; }
.head { height: 16px; background: #ece9d8; border-right: 1px solid #000; border-bottom: 1px solid #000; box-shadow: inset 1px 1px #fff, inset -1px -1px #aca899; display: flex; justify-content: center; overflow: hidden; font-style: italic; line-height: 16px; flex-shrink: 0; padding-left: 3px; }
.head.right { justify-content: flex-end; padding-right: 4px; }
.head.right:nth-child(2) { padding-right: 17px; }
.head.right:nth-child(6) { padding-right: 0; }
.head.shift { line-height: 5px; }
.head.active { background: #aca899; color: #fff; box-shadow: none; }
.rows { flex: 1; margin-top: 1px; border-top: 3px solid #ece9d8; box-shadow: inset 0 1px #000; padding-top: 1px; }
.row { height: 16px; display: flex; }
.row.picked .cell { background: #ff0; }
.cell { height: 16px; border-right: 1px dotted #000; border-bottom: 1px dotted #000; padding-left: 4px; line-height: 16px; overflow: hidden; flex-shrink: 0; }
.cell:nth-child(n + 9) { padding-left: 5px; }
.cell.right { display: flex; justify-content: flex-end; padding-right: 3px; }
.hscroll { height: 16px; display: flex; background: #ece9d8; border-top: 1px solid #fff; padding-left: 1px; }
.hb { width: 16px; border-right: 1px solid #000; box-shadow: inset 1px 1px #fff, inset -1px -1px #aca899; }
.htrack { width: 1118px; border-left: 1px solid #fff; border-right: 1px solid #000; box-shadow: inset -1px 0 #aca899; }
.side { width: 17px; border-left: 1px solid #fff; padding: 20px 0 14px; background: #ece9d8; }
.sb.white { background: #fff; border-left: 1px solid #aca899; border-top-color: #aca899; height: 17px; }
.status { height: 21px; display: flex; align-items: center; padding: 0 9px 0 5px; justify-content: space-between; }
.taskbar { height: 30px; display: flex; align-items: center; background: linear-gradient(#2a56bc 0, #3b83e8 6%, #4590ea 10%, #2c70e0 15%, #235cd8 22%, #2158d6 40%, #2562df 86%, #1f54cd 93%, #1941a5 100%); color: #fff; font-family: "DejaVu Sans Condensed", sans-serif; font-size: 11px; }
.start { width: 97px; height: 30px; display: flex; align-items: center; padding-left: 10px; border-radius: 0 9px 12px 0; background: linear-gradient(#296929 0, #5fae5f 7%, #3f983f 15%, #378f37 50%, #3e9c3e 85%, #286a28 100%); box-shadow: inset -4px 0 5px #2a6f2a, 1px 0 2px #153f9a; }
.start span { font: italic bold 17px/20px "Open Sans", sans-serif; margin-left: 5px; text-shadow: 1px 1px 1px #234d20; }
.quick { display: flex; align-items: center; gap: 7px; margin-left: 12px; width: 135px; }
.quick span { margin: -11px 0 0 5px; font-size: 13px; color: #c8dcff; }
.tasks { display: flex; gap: 2px; margin-left: 2px; }
.task { width: 158px; height: 24px; border-radius: 3px; display: flex; align-items: center; gap: 3px; padding-left: 9px; background: linear-gradient(#5c9cf8, #3e83f2 15%, #3a7ef0 80%, #2e68d4); box-shadow: inset 1px 0 #5f9bf5; }
.task.current { background: #1c4fb4; box-shadow: inset 1px 1px 2px #123780; width: 160px; }
.ask { margin-left: auto; margin-right: 14px; }
.tray { width: 182px; height: 30px; background: linear-gradient(#1682d8 0, #18b0f0 8%, #109ae4 18%, #0f8de2 60%, #159cf0 90%, #0d6eb8 100%); border-left: 1px solid #0d3f97; display: flex; align-items: center; padding-left: 8px; }
.tray-icons { display: flex; gap: 2.300px; width: 115px; }
</style>
